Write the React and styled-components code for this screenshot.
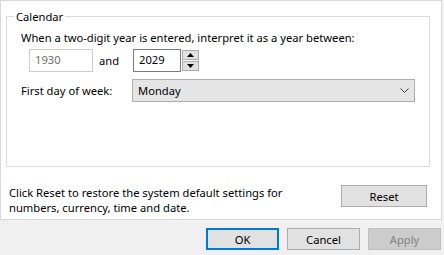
import React from "react";
import styled, { createGlobalStyle } from "styled-components";

const Global = createGlobalStyle`
  html, body { margin: 0; padding: 0; background: #f0f0f0; }
  body { font-family: "Noto Sans", "Liberation Sans", sans-serif; font-size: 11.2px; color: #000; }
`;

const Window = styled.div`
  width: 444px;
  height: 255px;
  background: #f0f0f0;
  display: flex;
  flex-direction: column;
  overflow: hidden;
`;

const Panel = styled.div`
  width: 442px;
  height: 220px;
  box-sizing: border-box;
  background: #fff;
  border: 1px solid #d9d9d9;
  display: flex;
  flex-direction: column;
`;

const GroupBox = styled.div`
  position: relative;
  box-sizing: border-box;
  margin: 15px 0 0 5px;
  width: 424px;
  height: 151px;
  border: 1px solid #dcdcdc;
  padding: 13px 0 0 14px;
  display: flex;
  flex-direction: column;
`;

const Legend = styled.span`
  position: absolute;
  top: -8px;
  left: 7px;
  padding: 0 2px;
  background: #fff;
  line-height: 15px;
`;

const Label = styled.div`
  line-height: 15px;
  white-space: nowrap;
`;

const Row = styled.div`
  display: flex;
  align-items: center;
  height: 23px;
  margin-top: ${(p) => p.$mt || 0}px;
  padding-left: ${(p) => p.$pl || 0}px;
`;

const TextBox = styled.div`
  box-sizing: border-box;
  width: ${(p) => p.$w}px;
  height: 23px;
  border: 1px solid ${(p) => (p.$disabled ? "#cccccc" : "#7a7a7a")};
  background: #fff;
  color: ${(p) => (p.$disabled ? "#6d6d6d" : "#000")};
  padding-left: 5px;
  line-height: 20px;
`;

const And = styled.span`
  margin: 0 0 0 6px;
  width: 34px;
`;

const Spinner = styled.div`
  display: flex;
  flex-direction: column;
  margin-left: 1px;
  height: 23px;
  justify-content: space-between;
  padding: 1px 0;
  box-sizing: border-box;
`;

const SpinButton = styled.div`
  box-sizing: border-box;
  width: 17px;
  height: 10px;
  background: #e1e1e1;
  border: 1px solid #adadad;
  display: flex;
  align-items: center;
  justify-content: center;
`;

const RowLabel = styled.span`
  width: 111px;
  white-space: nowrap;
`;

const Select = styled.div`
  box-sizing: border-box;
  width: 283px;
  height: 23px;
  background: #e5e5e5;
  border: 1px solid #adadad;
  display: flex;
  align-items: center;
  justify-content: space-between;
  padding: 0 5px 0 5px;
`;

const ResetArea = styled.div`
  display: flex;
  justify-content: space-between;
  align-items: flex-start;
  padding: 18px 14px 0 8px;
`;

const Note = styled.div`
  line-height: 15px;
`;

const Button = styled.div`
  box-sizing: border-box;
  width: ${(p) => p.$w || 73}px;
  height: 22px;
  background: ${(p) => (p.$disabled ? "#cccccc" : "#e1e1e1")};
  border: ${(p) => (p.$primary ? "2px solid #0078d7" : p.$disabled ? "1px solid #bfbfbf" : "1px solid #adadad")};
  color: ${(p) => (p.$disabled ? "#838383" : "#000")};
  display: flex;
  align-items: center;
  justify-content: center;
  line-height: 15px;
`;

const ButtonBar = styled.div`
  display: flex;
  justify-content: flex-end;
  gap: 8px;
  padding: 8px 3px 0 0;
`;

const Up = () => (
  <svg width="7" height="4" viewBox="0 0 7 4">
    <path d="M0 4 L3.5 0 L7 4 Z" fill="#000" />
  </svg>
);
const Down = () => (
  <svg width="7" height="4" viewBox="0 0 7 4">
    <path d="M0 0 L3.5 4 L7 0 Z" fill="#000" />
  </svg>
);
const Chevron = () => (
  <svg width="9" height="5" viewBox="0 0 9 5">
    <path d="M0.5 0.5 L4.5 4.5 L8.5 0.5" fill="none" stroke="#404040" strokeWidth="1" />
  </svg>
);

export default function App() {
  return (
    <Window>
      <Global />
      <Panel>
        <GroupBox>
          <Legend>Calendar</Legend>
          <Label>When a two-digit year is entered, interpret it as a year between:</Label>
          <Row $mt={4} $pl={8}>
            <TextBox $w={64} $disabled>1930</TextBox>
            <And>and</And>
            <TextBox $w={48}>2029</TextBox>
            <Spinner>
              <SpinButton><Up /></SpinButton>
              <SpinButton><Down /></SpinButton>
            </Spinner>
          </Row>
          <Row $mt={7}>
            <RowLabel>First day of week:</RowLabel>
            <Select>
              <span>Monday</span>
              <Chevron />
            </Select>
          </Row>
        </GroupBox>
        <ResetArea>
          <Note>
            Click Reset to restore the system default settings for
            <br />
            numbers, currency, time and date.
          </Note>
          <Button $w={86}>Reset</Button>
        </ResetArea>
      </Panel>
      <ButtonBar>
        <Button $primary>OK</Button>
        <Button>Cancel</Button>
        <Button $disabled>Apply</Button>
      </ButtonBar>
    </Window>
  );
}
